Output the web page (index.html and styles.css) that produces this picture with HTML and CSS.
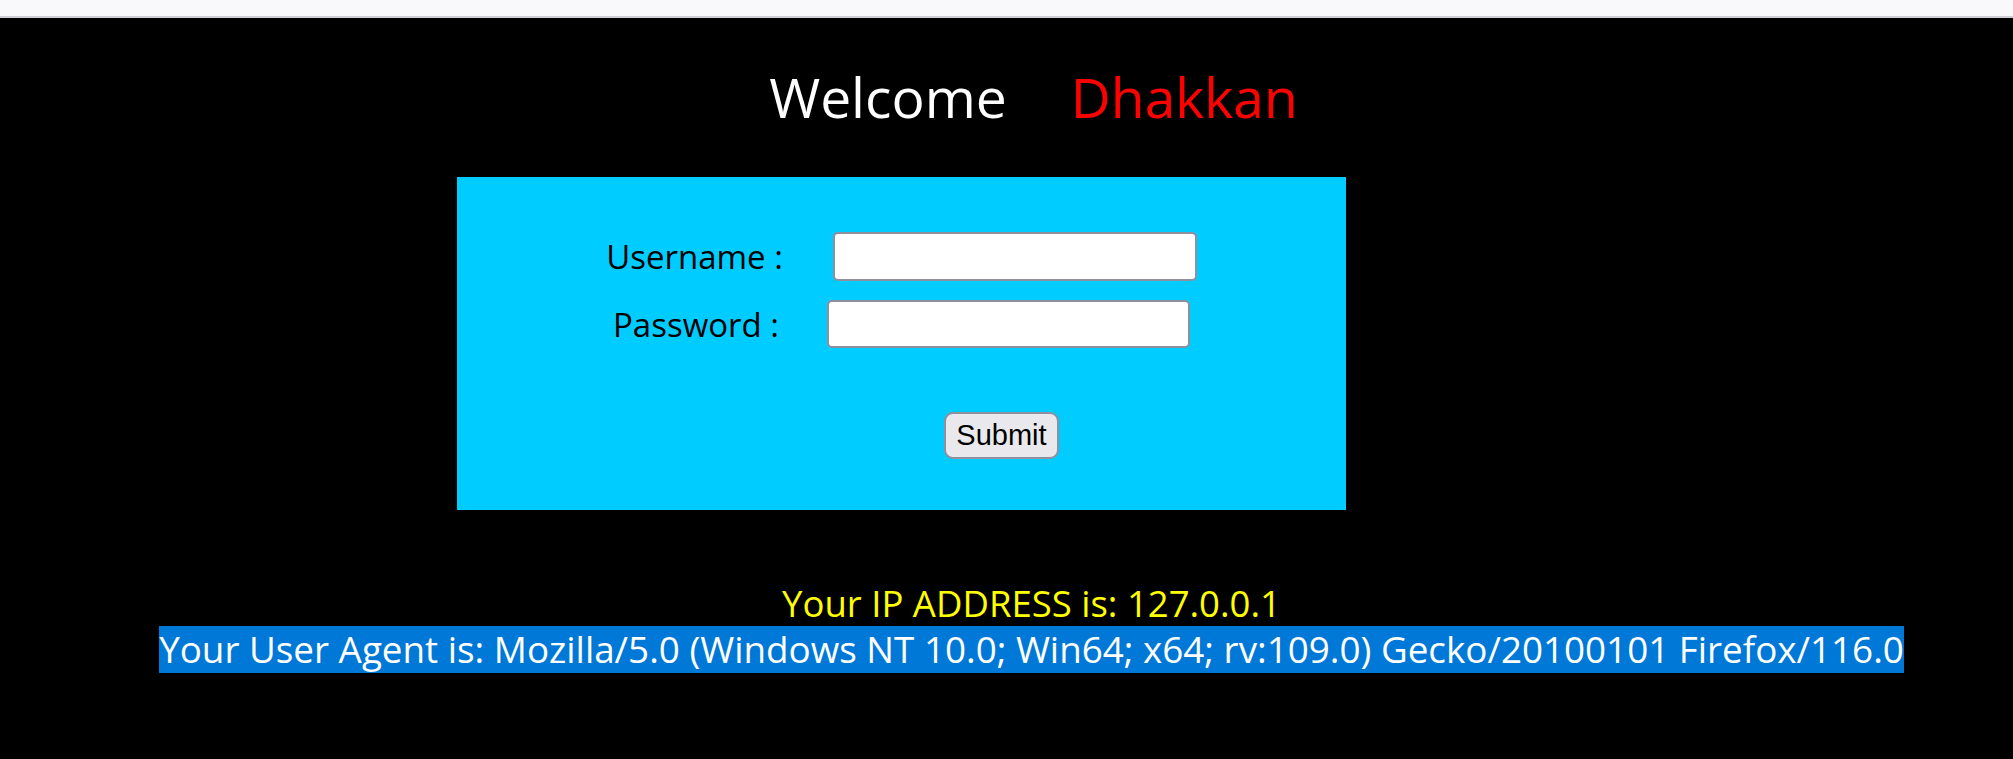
FILE: index.html
```html
<!DOCTYPE html>
<html>
<head>
<meta charset="utf-8">
<title>Less</title>
<link rel="stylesheet" href="styles.css">
</head>
<body>
<div class="toolbar"></div>
<main class="page">
  <div class="title">
    <span class="welcome">Welcome</span>
    <span class="name">Dhakkan</span>
  </div>
  <div class="login">
    <form class="form" action="" method="post">
      <div class="row row-user">
        <label class="label">Username :</label>
        <input class="field field-user" type="text" name="uname" value="">
      </div>
      <div class="row row-pass">
        <label class="label">Password :</label>
        <input class="field field-pass" type="text" name="passwd" value="">
      </div>
      <div class="row row-submit">
        <input class="submit" type="submit" name="submit" value="Submit">
      </div>
    </form>
  </div>
  <div class="info">
    <div class="ip">Your IP ADDRESS is: 127.0.0.1</div>
    <div class="ua"><span class="sel">Your User Agent is: Mozilla/5.0 (Windows NT 10.0; Win64; x64; rv:109.0) Gecko/20100101 Firefox/116.0</span></div>
  </div>
</main>
</body>
</html>
```
FILE: styles.css
```css
html, body {
  margin: 0;
  padding: 0;
  background: #000;
  height: 100%;
}
body {
  font-family: "Open Sans", "Noto Sans", sans-serif;
  overflow: hidden;
}
.toolbar {
  height: 16px;
  background: #f9f9fb;
  border-bottom: 2px solid #cfcfd8;
}
.page {
  background: #000;
  padding-left: 50px;
  height: 741px;
  box-sizing: border-box;
}
.title {
  padding-top: 41px;
  display: flex;
  justify-content: center;
  gap: 64px;
  font-size: 55.2px;
  line-height: 75px;
  padding-left: 4px;
}
.welcome { color: #fff; }
.name { color: #ff0000; }
.login {
  margin-top: 43px;
  margin-left: 407px;
  width: 889px;
  height: 333px;
  background: #00ccff;
}
.form {
  margin: 0;
  padding-top: 55px;
}
.row {
  display: flex;
  justify-content: center;
  align-items: center;
}
.row-user { gap: 50px; }
.row-pass { gap: 48px; margin-top: 19px; }
.row-submit { margin-top: 64px; padding-left: 200px; }
.label {
  font-size: 33px;
  line-height: 45px;
  color: #000;
}
.field {
  box-sizing: border-box;
  background: #fff;
  border: 2px solid #8f8f9d;
  border-radius: 5px;
  margin: 0;
  padding: 0 6px;
}
.field-user { width: 364px; height: 49px; }
.field-pass { width: 363px; height: 48px; }
.submit {
  box-sizing: border-box;
  width: 115px;
  height: 47px;
  margin: 0;
  padding: 0;
  background: #e9e9ed;
  border: 2px solid #8f8f9d;
  border-radius: 9px;
  font-family: "Liberation Sans", Arial, sans-serif;
  font-size: 29px;
  color: #000;
}
.info {
  margin-top: 70px;
  text-align: center;
}
.ip {
  color: #ffff00;
  font-size: 36.5px;
  line-height: 46px;
}
.ua {
  font-size: 36.8px;
  line-height: 47px;
}
.sel {
  display: inline-block;
  background: #0078d7;
  color: #fff;
  line-height: 47px;
}
```
